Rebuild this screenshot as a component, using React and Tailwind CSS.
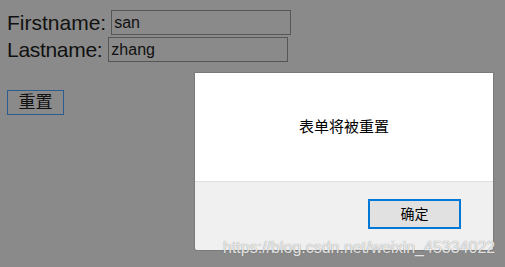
export default function App() {
  const sans = { fontFamily: '"Liberation Sans", "Noto Sans CJK SC", sans-serif' };

  return (
    <div className="relative w-[505px] h-[267px] bg-[#8a8a8a] overflow-hidden text-[#111]" style={sans}>
      {/* Form */}
      <form className="pl-[7px] pt-[10px] flex flex-col items-start">
        <label className="flex items-center h-[25px] text-[21px] leading-none">
          Firstname:
          <input
            defaultValue="san"
            className="ml-[5px] w-[180px] h-[25px] border border-[#565656] bg-transparent px-[2px] text-[16px] text-[#111] outline-none"
            style={sans}
          />
        </label>
        <label className="mt-[2px] flex items-center h-[25px] text-[21px] leading-none tracking-[-0.3px]">
          Lastname:
          <input
            defaultValue="zhang"
            className="ml-[6px] w-[180px] h-[25px] border border-[#565656] bg-transparent px-[2px] text-[16px] tracking-normal text-[#111] outline-none"
            style={sans}
          />
        </label>
        <button
          type="button"
          className="mt-[28px] w-[57px] h-[25px] border border-[#2c5c8d] bg-[#8a8a8a] text-[17px] leading-none text-[#111] flex items-center justify-center"
        >
          重置
        </button>
      </form>

      {/* Alert dialog */}
      <div className="absolute left-[194px] top-[72px] w-[300px] h-[179px] border border-[#7a7a7a] rounded-b-[3px] overflow-hidden flex flex-col">
        <div className="h-[108px] bg-white flex items-center justify-center text-[15px] text-black">
          表单将被重置
        </div>
        <div className="flex-1 bg-[#f0f0f0] border-t border-[#dfdfdf] flex justify-end items-start pt-[17px] pr-[32px]">
          <button className="w-[93px] h-[30px] border-2 border-[#0078d7] bg-[#e1e1e1] text-[14px] text-black flex items-center justify-center">
            确定
          </button>
        </div>
      </div>

      {/* Watermark */}
      <div
        className="absolute left-[223px] top-[236px] text-[16px] text-white/80 whitespace-nowrap"
        style={{ textShadow: '0 0 1px rgba(90,90,90,0.8)' }}
      >
        https://blog.csdn.net/weixin_45334022
      </div>
    </div>
  );
}
